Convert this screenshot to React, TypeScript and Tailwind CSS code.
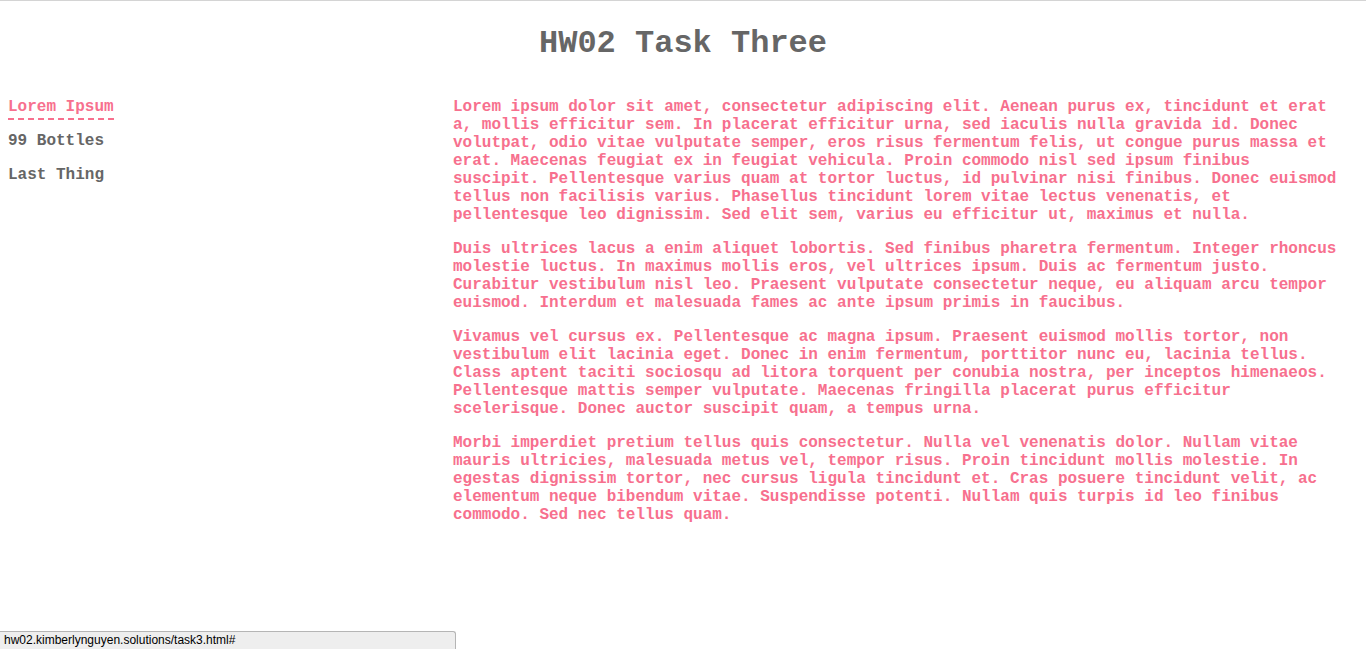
import React from 'react';

const paragraphs = [
  'Lorem ipsum dolor sit amet, consectetur adipiscing elit. Aenean purus ex, tincidunt et erat a, mollis efficitur sem. In placerat efficitur urna, sed iaculis nulla gravida id. Donec volutpat, odio vitae vulputate semper, eros risus fermentum felis, ut congue purus massa et erat. Maecenas feugiat ex in feugiat vehicula. Proin commodo nisl sed ipsum finibus suscipit. Pellentesque varius quam at tortor luctus, id pulvinar nisi finibus. Donec euismod tellus non facilisis varius. Phasellus tincidunt lorem vitae lectus venenatis, et pellentesque leo dignissim. Sed elit sem, varius eu efficitur ut, maximus et nulla.',
  'Duis ultrices lacus a enim aliquet lobortis. Sed finibus pharetra fermentum. Integer rhoncus molestie luctus. In maximus mollis eros, vel ultrices ipsum. Duis ac fermentum justo. Curabitur vestibulum nisl leo. Praesent vulputate consectetur neque, eu aliquam arcu tempor euismod. Interdum et malesuada fames ac ante ipsum primis in faucibus.',
  'Vivamus vel cursus ex. Pellentesque ac magna ipsum. Praesent euismod mollis tortor, non vestibulum elit lacinia eget. Donec in enim fermentum, porttitor nunc eu, lacinia tellus. Class aptent taciti sociosqu ad litora torquent per conubia nostra, per inceptos himenaeos. Pellentesque mattis semper vulputate. Maecenas fringilla placerat purus efficitur scelerisque. Donec auctor suscipit quam, a tempus urna.',
  'Morbi imperdiet pretium tellus quis consectetur. Nulla vel venenatis dolor. Nullam vitae mauris ultricies, malesuada metus vel, tempor risus. Proin tincidunt mollis molestie. In egestas dignissim tortor, nec cursus ligula tincidunt et. Cras posuere tincidunt velit, ac elementum neque bibendum vitae. Suspendisse potenti. Nullam quis turpis id leo finibus commodo. Sed nec tellus quam.',
];

const App = () => {
  return (
    <div className="min-h-[649px] bg-white border-t border-[#d4d4d4] font-['Liberation_Mono',monospace] font-bold">
      <h1 className="text-center text-[32px] leading-[36px] text-[#666666] pt-[25px] pb-[36px]">
        HW02 Task Three
      </h1>

      <div className="flex px-2">
        <nav className="w-[445px] shrink-0 flex flex-col text-base leading-[18px]">
          <a href="#" className="self-start mb-3 pb-[2px] text-[#f7708e] border-b-2 border-dashed border-[#f7708e]">
            Lorem Ipsum
          </a>
          <a href="#" className="self-start mb-4 text-[#666666]">99 Bottles</a>
          <a href="#" className="self-start text-[#666666]">Last Thing</a>
        </nav>

        <main className="w-[888px] flex flex-col gap-4 text-base leading-[18px] text-[#f7708e]">
          {paragraphs.map((p, i) => (
            <p key={i}>{p}</p>
          ))}
        </main>
      </div>

      <div className="fixed left-0 bottom-0 w-[456px] h-[18px] bg-[#eeeeee] border border-[#b5b5b5] border-l-0 border-b-0 rounded-tr-[3px] pl-1 font-['Liberation_Sans',sans-serif] font-normal text-[12px] leading-[17px] text-black">
        hw02.kimberlynguyen.solutions/task3.html#
      </div>
    </div>
  );
};

export default App;
